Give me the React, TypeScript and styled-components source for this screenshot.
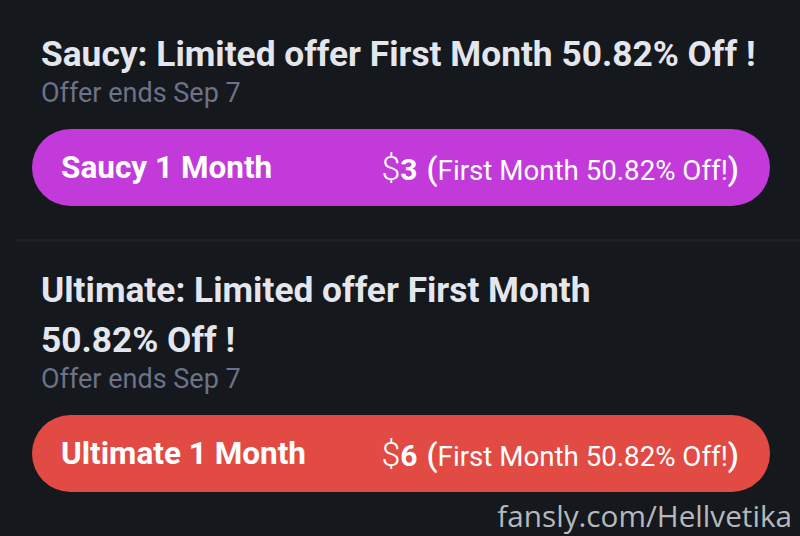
import React from "react";
import styled, { createGlobalStyle } from "styled-components";

interface Offer {
  name: string;
  tier: string;
  price: number;
  discount: string;
  ends: string;
  color: string;
}

const offers: Offer[] = [
  {
    name: "Saucy",
    tier: "Saucy 1 Month",
    price: 3,
    discount: "50.82%",
    ends: "Sep 7",
    color: "#c23ad9"
  },
  {
    name: "Ultimate",
    tier: "Ultimate 1 Month",
    price: 6,
    discount: "50.82%",
    ends: "Sep 7",
    color: "#e24a44"
  }
];

const GlobalStyle = createGlobalStyle`
  html, body {
    margin: 0;
    background: #15181c;
  }
  body {
    font-family: Roboto, "Liberation Sans", sans-serif;
  }
`;

const App = () => {
  return (
    <Page>
      <GlobalStyle />
      {offers.map((offer, i) => (
        <React.Fragment key={offer.name}>
          {i > 0 && <Divider />}
          <OfferBlock>
            <Title>
              {offer.name}: Limited offer First Month{" "}
              <NoWrap>{offer.discount} Off !</NoWrap>
            </Title>
            <Ends>Offer ends {offer.ends}</Ends>
            <TierButton $color={offer.color}>
              <TierName>{offer.tier}</TierName>
              <Price>
                <Dollar>$</Dollar>
                <Amount>{offer.price}</Amount>
                <Paren>(</Paren>
                <Note>First Month {offer.discount} Off!</Note>
                <Paren>)</Paren>
              </Price>
            </TierButton>
          </OfferBlock>
        </React.Fragment>
      ))}
      <Watermark>fansly.com/Hellvetika</Watermark>
    </Page>
  );
};

const Page = styled.main`
  position: relative;
  width: 800px;
  height: 536px;
  overflow: hidden;
  padding-top: 29px;
  box-sizing: border-box;
`;

const OfferBlock = styled.section`
  padding: 0 30px 0 32px;
`;

const Title = styled.h2`
  margin: 0;
  padding-left: 9px;
  font-size: 35.3px;
  font-weight: 700;
  line-height: 50px;
  color: #e4e6ee;
`;

const NoWrap = styled.span`
  white-space: nowrap;
`;

const Ends = styled.div`
  padding-left: 9px;
  font-size: 27px;
  line-height: 28px;
  color: #6c7287;
`;

const TierButton = styled.div<{ $color: string }>`
  display: flex;
  align-items: center;
  justify-content: space-between;
  height: 77px;
  margin-top: 22px;
  padding: 0 31px 0 29px;
  border-radius: 39px;
  background: ${(p) => p.$color};
  color: #ffffff;
`;

const TierName = styled.span`
  font-size: 31.5px;
  font-weight: 700;
`;

const Price = styled.span`
  display: flex;
  align-items: baseline;
`;

const Dollar = styled.span`
  font-size: 34px;
  font-weight: 300;
`;

const Amount = styled.span`
  font-size: 30px;
  font-weight: 700;
  margin-right: 9px;
`;

const Paren = styled.span`
  font-size: 32px;
  font-weight: 500;
`;

const Note = styled.span`
  font-size: 27.7px;
  font-weight: 400;
`;

const Divider = styled.hr`
  margin: 33px 0 23px 16px;
  border: none;
  height: 3px;
  background: #1c1f23;
`;

const Watermark = styled.div`
  position: absolute;
  right: 8px;
  bottom: 0;
  font-family: "Open Sans", "DejaVu Sans", sans-serif;
  font-size: 29.7px;
  color: #b5b9bd;
`;

export default App;
